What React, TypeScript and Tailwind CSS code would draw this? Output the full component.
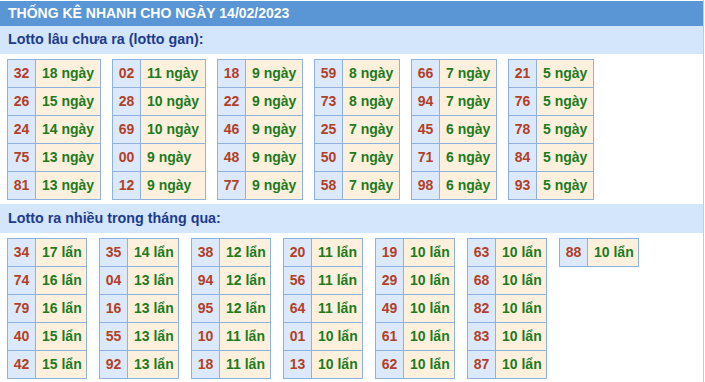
const gan: [string, string][][] = [
  [["32", "18"], ["26", "15"], ["24", "14"], ["75", "13"], ["81", "13"]],
  [["02", "11"], ["28", "10"], ["69", "10"], ["00", "9"], ["12", "9"]],
  [["18", "9"], ["22", "9"], ["46", "9"], ["48", "9"], ["77", "9"]],
  [["59", "8"], ["73", "8"], ["25", "7"], ["50", "7"], ["58", "7"]],
  [["66", "7"], ["94", "7"], ["45", "6"], ["71", "6"], ["98", "6"]],
  [["21", "5"], ["76", "5"], ["78", "5"], ["84", "5"], ["93", "5"]],
];

const nhieu: [string, string][][] = [
  [["34", "17"], ["74", "16"], ["79", "16"], ["40", "15"], ["42", "15"]],
  [["35", "14"], ["04", "13"], ["16", "13"], ["55", "13"], ["92", "13"]],
  [["38", "12"], ["94", "12"], ["95", "12"], ["10", "11"], ["18", "11"]],
  [["20", "11"], ["56", "11"], ["64", "11"], ["01", "10"], ["13", "10"]],
  [["19", "10"], ["29", "10"], ["49", "10"], ["61", "10"], ["62", "10"]],
  [["63", "10"], ["68", "10"], ["82", "10"], ["83", "10"], ["87", "10"]],
  [["88", "10"]],
];

// value column width depends on widest value in the box
function Box({ rows, unit, wide }: { rows: [string, string][]; unit: string; wide: string }) {
  return (
    <div className="border-r border-b border-[#8fb1de]">
      {rows.map(([n, v]) => (
        <div key={n} className="flex h-[28px]">
          <div className="w-[28px] border-l border-t border-[#8fb1de] bg-[#dce9fa] flex items-center justify-center text-[#b23f28]">
            {n}
          </div>
          <div className={`${wide} border-l border-t border-[#8fb1de] bg-[#fdf1de] pl-[6px] flex items-center text-[#1e7b1e] whitespace-nowrap`}>
            {v} {unit}
          </div>
        </div>
      ))}
    </div>
  );
}

export default function App() {
  return (
    <div
      className="w-[704px] h-[382px] overflow-hidden border-r border-[#c9c9c9] bg-white text-[14px] font-bold"
      style={{ fontFamily: '"Liberation Sans", Arial, sans-serif' }}
    >
      <div className="mt-[1px] h-[25px] bg-[#5a96d5] pl-[8px] flex items-center text-[14px] text-white">
        THỐNG KÊ NHANH CHO NGÀY 14/02/2023
      </div>
      <div className="h-[28px] bg-[#d4e6fb] pl-[8px] flex items-center text-[14.3px] text-[#1d3b8d]">
        Lotto lâu chưa ra (lotto gan):
      </div>
      <div className="flex items-start gap-x-[11px] pl-[7px] pt-[5px] pb-[4px]">
        {gan.map((rows, i) => (
          <Box key={i} rows={rows} unit="ngày" wide={i < 2 ? "w-[65px]" : "w-[57px]"} />
        ))}
      </div>
      <div className="h-[29px] bg-[#d4e6fb] pl-[8px] flex items-center text-[14.3px] text-[#1d3b8d]">
        Lotto ra nhiều trong tháng qua:
      </div>
      <div className="flex items-start gap-x-[12px] pl-[7px] pt-[5px]">
        {nhieu.map((rows, i) => (
          <Box key={i} rows={rows} unit="lẩn" wide="w-[51px]" />
        ))}
      </div>
    </div>
  );
}
